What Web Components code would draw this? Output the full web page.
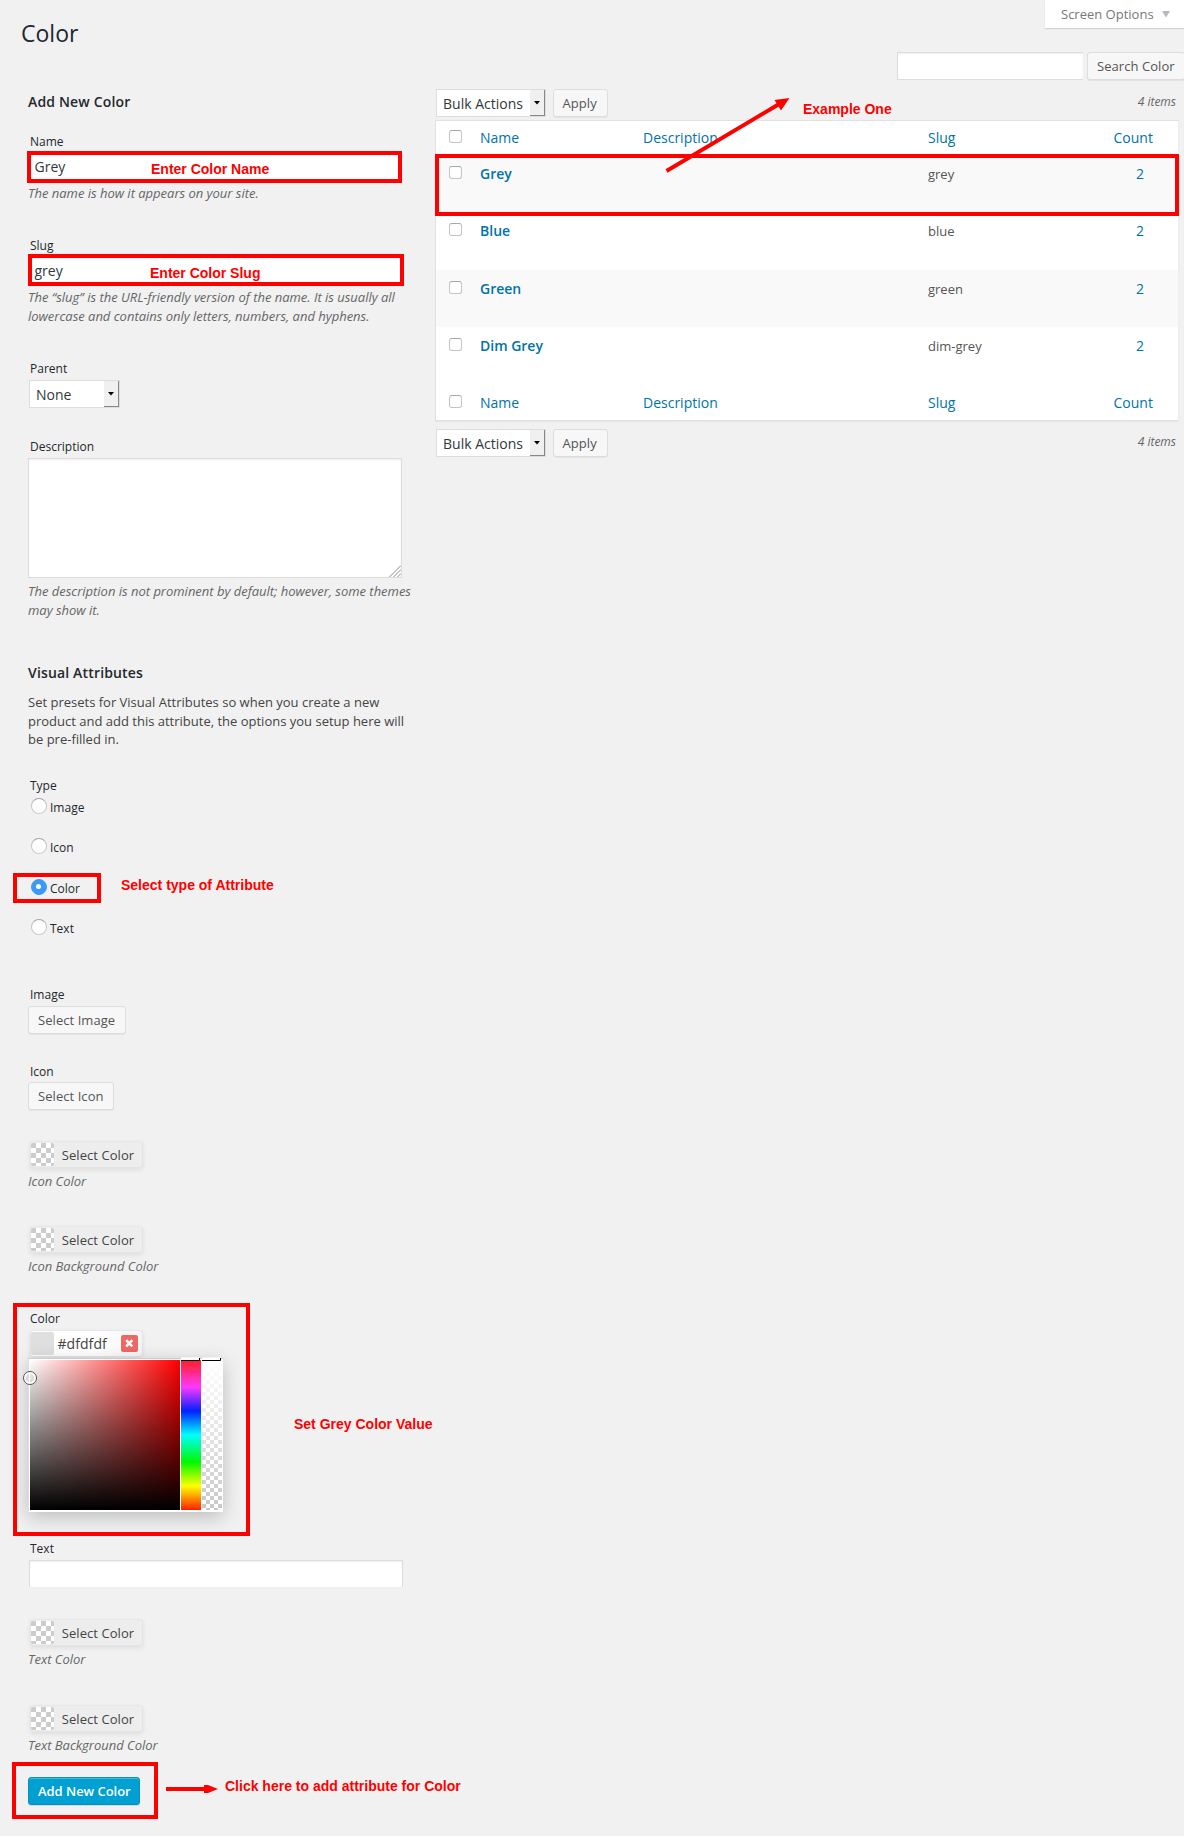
<!DOCTYPE html>
<html lang="en">
<head>
<meta charset="utf-8">
<title>Color</title>
<style>
html,body{margin:0;background:#f1f1f1}
body{width:1184px;height:1836px;overflow:hidden;font:13px/19px "Open Sans",sans-serif;color:#444}
</style>
</head>
<body>
<color-admin></color-admin>
<script>
function define(name, css, html) {
  customElements.define(name, class extends HTMLElement {
    connectedCallback() {
      if (this.shadowRoot) return;
      const root = this.attachShadow({mode: 'open'});
      const a = n => this.getAttribute(n) || '';
      root.innerHTML = '<style>*{box-sizing:border-box}:host{box-sizing:border-box}' + css + '</style>' +
        (typeof html === 'function' ? html(a) : html);
    }
  });
}

define('wp-heading', `:host{display:block;white-space:nowrap;color:#23282d;font-weight:600;font-size:14px;line-height:20px;letter-spacing:.16px}
:host([level="1"]){font-size:23px;line-height:30px;font-weight:400;letter-spacing:0}`, '<slot></slot>');

define('wp-field', `:host{display:flex;flex-direction:column;align-items:flex-start;flex:none;white-space:nowrap}
.label{font-size:12px;line-height:16px;color:#23282d;padding:1px 0 0 2px;margin-bottom:var(--gap,3px)}
.help{font-style:italic;color:#666;line-height:19px;margin-top:var(--help,4px);letter-spacing:-.015px}`,
a => (a('label') ? `<div class="label">${a('label')}</div>` : '') + '<slot></slot><div class="help"><slot name="help"></slot></div>');

define('wp-input', `:host{display:block;width:374px;height:27px;background:#fff;border:1px solid #ddd;border-bottom:0;box-shadow:inset 0 1px 2px rgba(0,0,0,.07);font-size:14px;line-height:26px;padding-left:5.5px;color:#32373c}
:host([boxed]){border-bottom:1px solid #ddd;border-right:0}`, '<slot></slot>');

define('wp-textarea', `:host{display:flex;justify-content:flex-end;align-items:flex-end;width:374px;height:120px;background:#fff;border:1px solid #ddd;box-shadow:inset 0 1px 2px rgba(0,0,0,.07)}svg{display:block}`,
`<svg width="12" height="12" viewBox="0 0 12 12" stroke="#8a8a8a" stroke-width="1"><path d="M0.5 12L12 .5M4.5 12L12 4.5M8.5 12L12 8.5" fill="none"/></svg>`);

define('wp-select', `:host{display:flex;height:28px;background:#fff;border:1px solid #ddd;font-size:14px;line-height:27px;color:#32373c;padding-left:6px;white-space:nowrap;justify-content:space-between}
.arrow{width:15px;height:26px;background:#f0f0f0;border-right:1.5px solid #888;border-bottom:1.5px solid #888;display:flex;justify-content:center;align-items:center}`,
`<span><slot></slot></span><span class="arrow"><svg width="6" height="4" viewBox="0 0 6 4"><path d="M0 0H6L3 3.6Z" fill="#000"/></svg></span>`);

define('wp-button', `:host{display:block;height:28px;border:1px solid #ddd;border-radius:3px;background:#f7f7f7;color:#555;font-size:13px;line-height:27px;padding:0 9.5px 0 9px;letter-spacing:.06px;white-space:nowrap;box-shadow:0 1px 0 rgba(0,0,0,.05)}
:host([primary]){width:112px;letter-spacing:-.04px;background:#00a0d2;border-color:#0691bd;color:#fff;font-weight:600;box-shadow:inset 0 1px 0 rgba(120,200,230,.6),0 1px 0 rgba(0,0,0,.1)}`, '<slot></slot>');

define('wp-radio', `:host{display:flex;height:40.33px;align-items:flex-start;gap:4px;font-size:12px;line-height:16px;color:#23282d;padding-left:2.5px}
i{width:16px;height:16px;border-radius:50%;background:#fff;border:1px solid #c4c4c4;border-top-color:#a4a4a4;border-bottom-color:#ccc;flex:none;display:flex;justify-content:center;align-items:center}
:host([checked]) i{background:#3b99fc;border-color:#3b99fc}
:host([checked]) i::after{content:"";width:5px;height:5px;border-radius:50%;background:#fff}
span{padding-top:2px;margin-left:-.5px}`, '<i></i><span><slot></slot></span>');

define('wp-check', `:host{display:block;width:13px;height:13px;border:1px solid #c4c4c4;border-top-color:#a6a6a6;border-radius:3px;background:#fff}`, '');

define('color-button', `:host{display:flex;align-items:center;width:113.5px;height:27px;margin-left:1.5px;border:1px solid #e4e4e4;border-top-color:#e8e8e8;border-radius:3px;background:#ededed;box-shadow:0 2px 5px rgba(0,0,0,.08);color:#444;line-height:26px;white-space:nowrap}
i{width:23px;height:23px;margin-left:.5px;border-radius:2px;flex:none;background:repeating-conic-gradient(#fff 0 25%,#ccc 0 50%) 0 0/10px 10px}
span{padding-left:7.8px;letter-spacing:.06px}
:host([value]){background:linear-gradient(90deg,#fff 60%,#f4f4f4)}
:host([value]) i{background:#dfdfdf}
:host([value]) span{font-size:14px;padding-left:3.5px;flex:1}
svg{margin-right:4px;display:block}`,
a => `<i></i><span>${a('value') || 'Select Color'}</span>` + (a('value') ? `<svg width="17" height="17" viewBox="0 0 17 17"><rect width="17" height="17" rx="2" fill="#ee6868"/><path d="M5.2 5.2L11.3 11.3M11.3 5.2L5.2 11.3" stroke="#fff" stroke-width="2.5"/></svg>` : ''));

define('color-picker', `:host{display:grid;position:relative;grid-template-columns:150px 20px 20px;column-gap:1px;width:195px;height:154px;border:1px solid #ccc;border-color:#ccc #fff #fff #ddd;padding:1px;background:#fff;box-shadow:0 5px 18px rgba(0,0,0,.22)}
.sv{background:linear-gradient(transparent,#000),linear-gradient(90deg,#fff,#f00)}
.hue{background:linear-gradient(#ff2020 0%,#ff38ff 18%,#0020ff 34%,#00ffff 50%,#00f800 68%,#ffff00 84%,#ff2000 100%)}
.alpha{background:linear-gradient(#fff,rgba(255,255,255,0)),repeating-conic-gradient(#fff 0 25%,#c8c8c8 0 50%) 0 0/8px 8px}
svg{position:absolute;left:-7px;top:-3px;overflow:visible}`,
`<div class="sv"></div><div class="hue"></div><div class="alpha"></div>
<svg width="210" height="40" viewBox="0 0 210 40" fill="none"><path d="M159 1.5h19v2.5h-19zM180 1.5h19v2.5h-19z" fill="#fff"/><path d="M159 4.5H177.500V2M180 4.5H198.500V2" stroke="#000" stroke-width="1"/><circle cx="8" cy="22" r="5.3" stroke="#fff" stroke-width="2"/><circle cx="8" cy="22" r="6.5" stroke="#555"/></svg>`);

define('tax-form', `:host{display:flex;flex-direction:column;align-items:flex-start;width:435px;padding:92px 0 0 28px;flex:none}
p{margin:0;line-height:18.5px;height:84px;white-space:nowrap;color:#444}`,
`<wp-heading style="height:41px">Add New Color</wp-heading>
<wp-field label="Name" style="height:104px"><wp-input boxed>Grey</wp-input><span slot="help">The name is how it appears on your site.</span></wp-field>
<wp-field label="Slug" style="height:123px"><wp-input boxed>grey</wp-input><span slot="help">The “slug” is the URL-friendly version of the name. It is usually all<br>lowercase and contains only letters, numbers, and hyphens.</span></wp-field>
<wp-field label="Parent" style="height:78px"><wp-select style="width:91px;margin-left:1px">None</wp-select></wp-field>
<wp-field label="Description" style="height:225px"><wp-textarea></wp-textarea><span slot="help">The description is not prominent by default; however, some themes<br>may show it.</span></wp-field>
<wp-heading style="height:30px">Visual Attributes</wp-heading>
<p>Set presets for Visual Attributes so when you create a new<br>product and add this attribute, the options you setup here will<br>be pre-filled in.</p>
<wp-field label="Type" style="height:209px;--gap:4px"><wp-radio>Image</wp-radio><wp-radio>Icon</wp-radio><wp-radio checked>Color</wp-radio><wp-radio>Text</wp-radio></wp-field>
<wp-field label="Image" style="height:77px"><wp-button style="width:98px">Select Image</wp-button></wp-field>
<wp-field label="Icon" style="height:78px;--gap:2px"><wp-button>Select Icon</wp-button></wp-field>
<wp-field style="height:85px"><color-button></color-button><span slot="help">Icon Color</span></wp-field>
<wp-field style="height:84px"><color-button></color-button><span slot="help">Icon Background Color</span></wp-field>
<wp-field label="Color" style="height:230px"><color-button value="#dfdfdf"></color-button><color-picker style="margin-top:1px"></color-picker></wp-field>
<wp-field label="Text" style="height:79px"><wp-input style="margin-left:1px"></wp-input></wp-field>
<wp-field style="height:86px"><color-button></color-button><span slot="help">Text Color</span></wp-field>
<wp-field style="height:72px"><color-button></color-button><span slot="help">Text Background Color</span></wp-field>
<wp-button primary>Add New Color</wp-button>`);

define('table-nav', `:host{display:flex;align-items:flex-start;gap:6.5px;height:31px;padding:0 8px 0 1px;color:#666}
i{margin-left:auto;font-size:12px;line-height:16px;padding-top:5px}`,
`<wp-select style="width:110px">Bulk Actions</wp-select><wp-button style="width:55px">Apply</wp-button><i>4 items</i>`);

define('term-row', `:host{display:grid;grid-template-columns:31px 163px 285px 1fr 64.5px;height:57.33px;padding:11px 0 0 13px;line-height:20px;color:#555;white-space:nowrap}
:host([striped]){background:#f9f9f9}
b{font-size:14px;font-weight:600;color:#0073aa}
.n{color:#0073aa;padding-left:22.5px;font-size:14px}
:host([head]){height:34px;padding-top:8px;font-size:14px;color:#0073aa}
:host([head="foot"]){height:36px;padding-top:10px}
:host([head]) b{font-weight:400}
:host([head]) .n{padding-left:0}
span,b{margin-top:-2px}:host([head]) span,:host([head]) b{margin-top:-1px}`,
a => `<wp-check style="margin-top:${a('head') ? 1 : 0}px"></wp-check><b>${a('name')}</b><span>${a('desc')}</span><span>${a('slug')}</span><span class="n">${a('count')}</span>`);

define('term-table', `:host{display:block;width:744px;background:#fff;border:1px solid #e1e1e1;border-right-color:#eee;box-shadow:0 1px 1px rgba(0,0,0,.04)}`,
`<term-row head="top" name="Name" desc="Description" slug="Slug" count="Count"></term-row>
<term-row striped name="Grey" slug="grey" count="2"></term-row>
<term-row name="Blue" slug="blue" count="2"></term-row>
<term-row striped name="Green" slug="green" count="2"></term-row>
<term-row name="Dim Grey" slug="dim-grey" count="2"></term-row>
<term-row head="foot" name="Name" desc="Description" slug="Slug" count="Count"></term-row>`);

define('term-list', `:host{display:flex;flex-direction:column;width:749px}
.options{align-self:flex-end;width:139px;height:28px;background:#fff;box-shadow:0 1px 1px rgba(0,0,0,.12);display:flex;align-items:center;gap:8px;padding:0 0 0 16px;color:#777;line-height:28px;white-space:nowrap}
.search{display:flex;justify-content:flex-end;gap:4px;margin:24px -1px 9px 0}
.search wp-input{width:186px;height:28px}
.bottom{margin-top:8px}`,
`<div class="options"><span>Screen Options</span><svg width="8" height="7" viewBox="0 0 8 7"><path d="M0 0H8L4 6.500Z" fill="#b4b9be"/></svg></div>
<div class="search"><wp-input boxed></wp-input><wp-button style="width:98px">Search Color</wp-button></div>
<table-nav></table-nav>
<term-table></term-table>
<table-nav class="bottom"></table-nav>`);

define('note-label', `:host{position:absolute;font:bold 14px/16px "Liberation Sans",Arial,sans-serif;color:#f00;white-space:nowrap}`, '<slot></slot>');
define('note-box', `:host{position:absolute;border:4px solid #f00}`, '');
define('note-arrows', `:host{position:absolute;left:0;top:0;width:1184px;height:1836px;pointer-events:none}svg{display:block}`,
`<svg width="1184" height="1836" viewBox="0 0 1184 1836" fill="#f00"><path d="M666.500 171L780 103.500" stroke="#f00" stroke-width="4"/><path d="M789.500 98L774.500 100L781 110.500Z"/><path d="M166 1787H204V1785H208L218 1789L208 1793H204V1791H166Z"/></svg>`);

define('color-admin', `:host{display:flex;position:relative;width:1184px;height:1836px;overflow:hidden;background:#f1f1f1}
.title{position:absolute;left:21px;top:18px}`,
`<wp-heading class="title" level="1">Color</wp-heading>
<tax-form></tax-form><term-list></term-list>
<note-box style="left:27px;top:151px;width:375px;height:32px"></note-box>
<note-box style="left:28px;top:254px;width:376px;height:32px"></note-box>
<note-box style="left:13px;top:873px;width:88px;height:30px"></note-box>
<note-box style="left:13px;top:1303px;width:237px;height:233px"></note-box>
<note-box style="left:12px;top:1762px;width:146px;height:57px"></note-box>
<note-box style="left:435px;top:154px;width:744px;height:62px"></note-box>
<note-arrows></note-arrows>
<note-label style="left:151px;top:161px">Enter Color Name</note-label>
<note-label style="left:150px;top:265px">Enter Color Slug</note-label>
<note-label style="left:121px;top:877px">Select type of Attribute</note-label>
<note-label style="left:294px;top:1416px">Set Grey Color Value</note-label>
<note-label style="left:225px;top:1778px">Click here to add attribute for Color</note-label>
<note-label style="left:803px;top:101px">Example One</note-label>`);
</script>
</body>
</html>
